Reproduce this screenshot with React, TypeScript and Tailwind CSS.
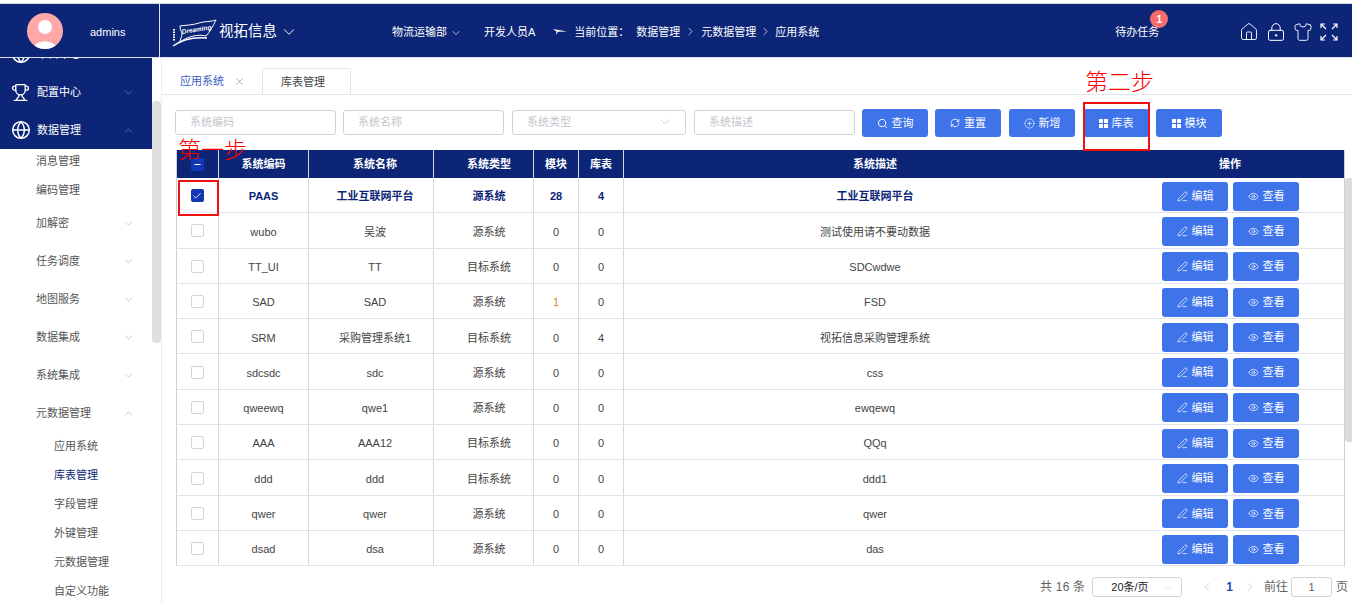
import React from "react";
import { ChevronDown, ChevronUp, ChevronLeft, ChevronRight, House, LockKeyhole, Shirt, Search, RefreshCw, CirclePlus, Eye, PenLine, Trophy, Globe, X, Check, Minus } from "lucide-react";

const font = "font-['Liberation_Sans','Noto_Sans_CJK_SC',sans-serif]";

const rows = [
  ["PAAS", "工业互联网平台", "源系统", "28", "4", "工业互联网平台"],
  ["wubo", "吴波", "源系统", "0", "0", "测试使用请不要动数据"],
  ["TT_UI", "TT", "目标系统", "0", "0", "SDCwdwe"],
  ["SAD", "SAD", "源系统", "1", "0", "FSD"],
  ["SRM", "采购管理系统1", "目标系统", "0", "4", "视拓信息采购管理系统"],
  ["sdcsdc", "sdc", "源系统", "0", "0", "css"],
  ["qweewq", "qwe1", "源系统", "0", "0", "ewqewq"],
  ["AAA", "AAA12", "目标系统", "0", "0", "QQq"],
  ["ddd", "ddd", "目标系统", "0", "0", "ddd1"],
  ["qwer", "qwer", "源系统", "0", "0", "qwer"],
  ["dsad", "dsa", "源系统", "0", "0", "das"],
];

const subMenu = ["加解密", "任务调度", "地图服务", "数据集成", "系统集成"];

function Btn({ icon, text, cls }: { icon: React.ReactNode; text: string; cls: string }) {
  return (
    <button className={`${cls} flex w-[66px] items-center justify-center gap-[4px] rounded-[3px] bg-[#3e73ea] text-[11px] text-white`}>
      {icon}
      {text}
    </button>
  );
}

function Field({ text, w, arrow }: { text: string; w: string; arrow?: boolean }) {
  return (
    <div className={`${w} mt-[-2px] flex h-[25px] items-center justify-between rounded-[3px] border border-[#d4d4d8] pl-[14px] pr-[12px] text-[11px] text-[#c4c6cc]`}>
      {text}
      {arrow && <ChevronDown size={16} strokeWidth={1} className="text-[#b9bcc4]" />}
    </div>
  );
}

function Squares() {
  return (
    <svg width="9" height="9" viewBox="0 0 10 10" fill="white">
      <rect x="0" y="0" width="4.4" height="4.4" />
      <rect x="5.6" y="0" width="4.4" height="4.4" />
      <rect x="0" y="5.6" width="4.4" height="4.4" />
      <rect x="5.6" y="5.6" width="4.4" height="4.4" />
    </svg>
  );
}

function Logo() {
  return (
    <svg width="46" height="30" viewBox="0 0 46 30" fill="none" stroke="white">
      <path d="M9 9 C16 8 22 8 28 6 C34 4 40 5 45 3 C42 9 39 15 35 19 C28 17 16 19 8 26 C10 22 11 19 11 16 C10 14 9 12 9 9Z" strokeWidth="1" />
      <path d="M2 29 C12 22 24 20 36 21" strokeWidth="1.3" />
      <path d="M3 12 V24" strokeWidth="2" strokeDasharray="1.5 1" />
      <text x="11" y="17" fontSize="6.5" fontStyle="italic" fontWeight="700" fill="white" stroke="none" fontFamily="Liberation Sans" transform="rotate(-9 11 17)">Dreaming</text>
    </svg>
  );
}

export default function App() {
  return (
    <div className={`${font} relative flex h-[603px] w-[1352px] flex-col overflow-hidden bg-white text-[11px] text-[#444]`}>
      {/* top bar */}
      <div className="mt-[3px] flex h-[54px] shrink-0 items-center border-t border-[#d8d8dc] bg-[#0c2576] pt-[2px] text-white">
        <div className="mt-[-2px] flex h-[53px] w-[160px] shrink-0 items-center border-r border-[#dfe3ee] pl-[27px] pt-[1px]">
          <div className="flex h-[36px] w-[36px] items-end justify-center overflow-hidden rounded-full bg-[#ffa8a8]">
            <svg width="36" height="36" viewBox="0 0 36 36" fill="white">
              <circle cx="18" cy="14" r="7" />
              <path d="M6 36 C7 26 29 26 30 36Z" />
            </svg>
          </div>
          <span className="ml-[27px] mt-[3px] text-[11px]">admins</span>
        </div>
        <div className="ml-[11px]"><Logo /></div>
        <span className="ml-[2px] text-[14.5px]">视拓信息</span>
        <ChevronDown size={18} strokeWidth={1.3} className="ml-[3px]" />
        <span className="ml-[94px] mt-[2px]">物流运输部</span>
        <ChevronDown size={12} strokeWidth={1.3} className="ml-[3px] mt-[2px]" />
        <span className="ml-[22px] mt-[2px]">开发人员A</span>
        <svg width="14" height="6" viewBox="0 0 14 6" fill="white" className="ml-[18px]"><path d="M0 0 L14 2.5 L5 2.8 L3 6 L3.5 2.5Z" /></svg>
        <span className="ml-[7px] mt-[1px]">当前位置：</span>
        <span className="ml-[7px] mt-[1px]">数据管理</span>
        <ChevronRight size={13} strokeWidth={1.3} className="mx-[4px]" />
        <span className="mt-[1px]">元数据管理</span>
        <ChevronRight size={13} strokeWidth={1.3} className="mx-[3px]" />
        <span className="mt-[1px]">应用系统</span>
        <span className="relative ml-[296px] mt-[2px]">
          待办任务
          <span className="absolute left-[35px] top-[-14px] flex h-[18px] w-[18px] items-center justify-center rounded-full bg-[#f56c6c] text-[10px] font-bold">1</span>
        </span>
        <div className="ml-[80px] flex items-center gap-[7px]">
          <House size={20} strokeWidth={1.1} />
          <LockKeyhole size={20} strokeWidth={1.2} />
          <Shirt size={20} strokeWidth={1.1} />
          <svg width="18" height="18" viewBox="0 0 18 18" fill="none" stroke="white" strokeWidth="1.2">
            <path d="M1 5V1H5M1 1L6 6M13 1H17V5M17 1L12 6M1 13V17H5M1 17L6 12M17 13V17H13M17 17L12 12" />
          </svg>
        </div>
      </div>

      <div className="flex min-h-0 flex-1 border-t border-[#dfe3ee]">
        {/* sidebar */}
        <div className="flex w-[162px] shrink-0 border-r border-[#eceef2]">
          <div className="w-[152px] shrink-0 overflow-hidden text-[#555]">
            <div className="mt-[-23px] flex h-[38px] items-center gap-[6px] bg-[#0c2576] pl-[11px] text-white">
              <Globe size={20} strokeWidth={1.8} />
              平台中心
            </div>
            <div className="flex h-[38px] items-center bg-[#0c2576] pl-[11px] text-white">
              <Trophy size={19} strokeWidth={1.7} />
              <span className="ml-[7px] flex-1">配置中心</span>
              <ChevronDown size={13} strokeWidth={1} className="mr-[17px] text-[#8d9cc6]" />
            </div>
            <div className="flex h-[38px] items-center bg-[#0c2576] pl-[11px] text-white">
              <Globe size={20} strokeWidth={1.8} />
              <span className="ml-[6px] flex-1">数据管理</span>
              <ChevronUp size={13} strokeWidth={1} className="mr-[17px] text-[#8d9cc6]" />
            </div>
            <div className="mt-[-3px] flex h-[30px] items-center pl-[36px]">消息管理</div>
            <div className="flex h-[28px] items-center pl-[36px]">编码管理</div>
            {subMenu.map((m) => (
              <div key={m} className="flex h-[38px] items-center pl-[36px]">
                <span className="flex-1">{m}</span>
                <ChevronDown size={13} strokeWidth={1} className="mr-[17px] text-[#9a9ea8]" />
              </div>
            ))}
            <div className="flex h-[38px] items-center pl-[36px]">
              <span className="flex-1">元数据管理</span>
              <ChevronUp size={13} strokeWidth={1} className="mr-[17px] text-[#9a9ea8]" />
            </div>
            {["应用系统", "库表管理", "字段管理", "外键管理", "元数据管理", "自定义功能"].map((s) => (
              <div key={s} className={`flex h-[29px] items-center pl-[54px] ${s === "库表管理" ? "text-[#0c2576]" : ""}`}>{s}</div>
            ))}
          </div>
          <div className="w-[9px] bg-white pt-[43px]">
            <div className="h-[242px] w-[9px] rounded-[4px] bg-[#dfdfdf]" />
          </div>
        </div>

        {/* main */}
        <div className="flex min-w-0 flex-1 flex-col">
          <div className="mt-[10px] flex h-[27px] shrink-0 border-b border-[#e6e7ee]">
            <div className="flex w-[100px] items-center gap-[10px] pl-[18px] pt-[1px] text-[#3a5bc8]">
              应用系统
              <X size={11} strokeWidth={1.2} className="text-[#5d6fa8]" />
            </div>
            <div className="flex h-[27px] w-[89px] items-center rounded-t-[3px] border border-[#e6e7ee] pl-[18px] pt-[1px] text-[#444]">库表管理</div>
          </div>

          <div className="flex h-[55px] shrink-0 items-center pl-[13px] pt-[1px]">
            <Field text="系统编码" w="w-[161px]" />
            <div className="w-[7px]" />
            <Field text="系统名称" w="w-[161px]" />
            <div className="w-[8px]" />
            <Field text="系统类型" w="w-[174px]" arrow />
            <div className="w-[8px]" />
            <Field text="系统描述" w="w-[161px]" />
            <div className="ml-[7px] flex">
              <Btn cls="h-[28px]" icon={<Search size={11} />} text="查询" />
              <Btn cls="ml-[7px] h-[28px]" icon={<RefreshCw size={10} />} text="重置" />
              <Btn cls="ml-[8px] h-[28px]" icon={<CirclePlus size={11} strokeWidth={1.4} />} text="新增" />
              <Btn cls="ml-[8px] h-[28px]" icon={<Squares />} text="库表" />
              <Btn cls="ml-[7px] h-[28px]" icon={<Squares />} text="模块" />
            </div>
          </div>

          <div className="flex min-h-0 flex-1 pl-[14px]">
            <div className="w-[1168px] shrink-0">
              <div className="flex h-[28px] border-l border-[#cfd0d8] bg-[#0c2576] text-center font-bold leading-[28px] text-white">
                <div className="flex w-[42px] items-center justify-center border-r border-[#d6d8e0] pr-[1px]">
                  <span className="flex h-[13px] w-[13px] items-center justify-center rounded-[2px] bg-[#1138b4]"><Minus size={9} strokeWidth={3} /></span>
                </div>
                <div className="w-[90px] border-r border-[#d6d8e0]">系统编码</div>
                <div className="w-[125px] border-r border-[#d6d8e0] pl-[8px]">系统名称</div>
                <div className="w-[100px] border-r border-[#d6d8e0] pl-[11px]">系统类型</div>
                <div className="w-[45px] border-r border-[#d6d8e0]">模块</div>
                <div className="w-[45px] border-r border-[#d6d8e0]">库表</div>
                <div className="w-[510px] pr-[8px]">系统描述</div>
                <div className="w-[210px] pr-[18px]">操作</div>
              </div>
              {rows.map((r, i) => (
                <div key={r[0]} className={`flex h-[35.3px] items-center border-b border-l border-[#e2e3ec] border-l-[#cfd0d8] text-center ${i === 0 ? "font-bold text-[#0c2576]" : "text-[#444]"}`}>
                  <div className="flex h-full w-[42px] items-center justify-center border-r border-[#d6d8e0] pr-[1px] pt-[1px]">
                    {i === 0 ? (
                      <span className="flex h-[13px] w-[13px] items-center justify-center rounded-[2px] bg-[#1138b4] text-white"><Check size={10} strokeWidth={2} /></span>
                    ) : (
                      <span className="h-[13px] w-[13px] rounded-[2px] border border-[#d4d5da]" />
                    )}
                  </div>
                  <div className="flex h-full w-[90px] items-center justify-center border-r border-[#d6d8e0] pt-[3px]">{r[0]}</div>
                  <div className="flex h-full w-[125px] items-center justify-center border-r border-[#d6d8e0] pl-[8px] pt-[3px]">{r[1]}</div>
                  <div className="flex h-full w-[100px] items-center justify-center border-r border-[#d6d8e0] pl-[11px] pt-[3px]">{r[2]}</div>
                  <div className={`flex h-full w-[45px] items-center justify-center border-r border-[#d6d8e0] pt-[3px] ${r[3] === "1" ? "text-[#c98a1b]" : ""}`}>{r[3]}</div>
                  <div className="flex h-full w-[45px] items-center justify-center border-r border-[#d6d8e0] pt-[3px]">{r[4]}</div>
                  <div className="w-[510px] pr-[8px] pt-[3px]">{r[5]}</div>
                  <div className="flex w-[210px] gap-[5px] pl-[28px] pt-[2px] font-normal">
                    <Btn cls="h-[29px]" icon={<PenLine size={11} strokeWidth={1.6} />} text="编辑" />
                    <Btn cls="h-[29px]" icon={<Eye size={11} strokeWidth={1.6} />} text="查看" />
                  </div>
                </div>
              ))}
            </div>
            <div className="h-[417px] w-px shrink-0 bg-[#d0d1d8]" />
            <div className="ml-auto w-[8px] pt-[28px]">
              <div className="h-[264px] w-[8px] rounded-[3px] bg-[#dcdcdc]" />
            </div>
          </div>
        </div>
      </div>

      {/* pagination */}
      <div className="absolute right-[4px] top-[577px] flex h-[20px] items-center text-[12px] text-[#606266]">
        <span className="mr-[7px] tracking-[0.2px]">共 16 条</span>
        <div className="flex h-[20px] w-[90px] items-center justify-between rounded-[3px] border border-[#d4d4d8] pl-[18px] pr-[8px] text-[11px] text-[#222]">
          20条/页
          <ChevronDown size={11} strokeWidth={1} className="text-[#b9bcc4]" />
        </div>
        <ChevronLeft size={14} strokeWidth={1.3} className="ml-[18px] text-[#c0c4cc]" />
        <span className="ml-[12px] mr-[10px] font-bold text-[#1f49b6]">1</span>
        <ChevronRight size={14} strokeWidth={1.3} className="text-[#c0c4cc]" />
        <span className="ml-[7px]">前往</span>
        <div className="ml-[3px] mr-[4px] flex h-[20px] w-[41px] items-center justify-center rounded-[3px] border border-[#d4d4d8] text-[11px]">1</div>
        <span>页</span>
      </div>

      {/* 标注 */}
      <div className="absolute left-[178px] top-[138px] text-[23px] font-extralight leading-[24px] text-[#ff0000]">第一步</div>
      <div className="absolute left-[1085px] top-[70px] text-[23px] font-extralight leading-[24px] text-[#ff0000]">第二步</div>
      <div className="absolute left-[178px] top-[180px] h-[36px] w-[41px] border-2 border-[#f01010]" />
      <div className="absolute left-[1083px] top-[102px] h-[49px] w-[67px] border-2 border-[#f01010]" />
    </div>
  );
}
